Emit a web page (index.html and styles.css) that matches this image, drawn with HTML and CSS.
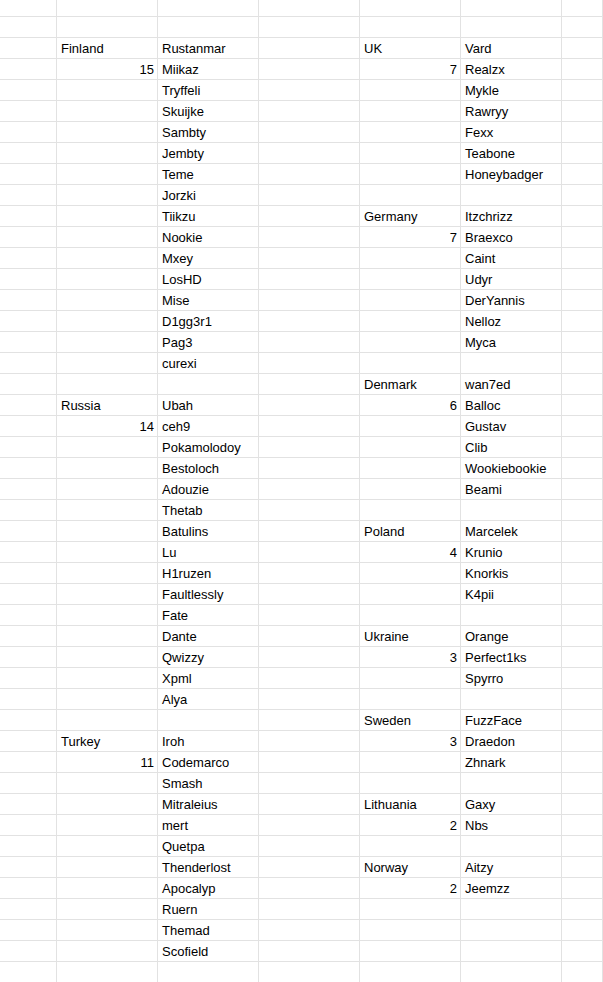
FILE: index.html
```html
<!DOCTYPE html>
<html>
<head>
<meta charset="utf-8">
<link rel="stylesheet" href="styles.css">
</head>
<body>
<div class="sheet">
<div class="row top"><span></span><span></span><span></span><span></span><span></span><span></span><span></span></div>
<div class="row"><span></span><span></span><span></span><span></span><span></span><span></span><span></span></div>
<div class="row"><span></span><span>Finland</span><span>Rustanmar</span><span></span><span>UK</span><span>Vard</span><span></span></div>
<div class="row"><span></span><span class="n">15</span><span>Miikaz</span><span></span><span class="n">7</span><span>Realzx</span><span></span></div>
<div class="row"><span></span><span></span><span>Tryffeli</span><span></span><span></span><span>Mykle</span><span></span></div>
<div class="row"><span></span><span></span><span>Skuijke</span><span></span><span></span><span>Rawryy</span><span></span></div>
<div class="row"><span></span><span></span><span>Sambty</span><span></span><span></span><span>Fexx</span><span></span></div>
<div class="row"><span></span><span></span><span>Jembty</span><span></span><span></span><span>Teabone</span><span></span></div>
<div class="row"><span></span><span></span><span>Teme</span><span></span><span></span><span>Honeybadger</span><span></span></div>
<div class="row"><span></span><span></span><span>Jorzki</span><span></span><span></span><span></span><span></span></div>
<div class="row"><span></span><span></span><span>Tiikzu</span><span></span><span>Germany</span><span>Itzchrizz</span><span></span></div>
<div class="row"><span></span><span></span><span>Nookie</span><span></span><span class="n">7</span><span>Braexco</span><span></span></div>
<div class="row"><span></span><span></span><span>Mxey</span><span></span><span></span><span>Caint</span><span></span></div>
<div class="row"><span></span><span></span><span>LosHD</span><span></span><span></span><span>Udyr</span><span></span></div>
<div class="row"><span></span><span></span><span>Mise</span><span></span><span></span><span>DerYannis</span><span></span></div>
<div class="row"><span></span><span></span><span>D1gg3r1</span><span></span><span></span><span>Nelloz</span><span></span></div>
<div class="row"><span></span><span></span><span>Pag3</span><span></span><span></span><span>Myca</span><span></span></div>
<div class="row"><span></span><span></span><span>curexi</span><span></span><span></span><span></span><span></span></div>
<div class="row"><span></span><span></span><span></span><span></span><span>Denmark</span><span>wan7ed</span><span></span></div>
<div class="row"><span></span><span>Russia</span><span>Ubah</span><span></span><span class="n">6</span><span>Balloc</span><span></span></div>
<div class="row"><span></span><span class="n">14</span><span>ceh9</span><span></span><span></span><span>Gustav</span><span></span></div>
<div class="row"><span></span><span></span><span>Pokamolodoy</span><span></span><span></span><span>Clib</span><span></span></div>
<div class="row"><span></span><span></span><span>Bestoloch</span><span></span><span></span><span>Wookiebookie</span><span></span></div>
<div class="row"><span></span><span></span><span>Adouzie</span><span></span><span></span><span>Beami</span><span></span></div>
<div class="row"><span></span><span></span><span>Thetab</span><span></span><span></span><span></span><span></span></div>
<div class="row"><span></span><span></span><span>Batulins</span><span></span><span>Poland</span><span>Marcelek</span><span></span></div>
<div class="row"><span></span><span></span><span>Lu</span><span></span><span class="n">4</span><span>Krunio</span><span></span></div>
<div class="row"><span></span><span></span><span>H1ruzen</span><span></span><span></span><span>Knorkis</span><span></span></div>
<div class="row"><span></span><span></span><span>Faultlessly</span><span></span><span></span><span>K4pii</span><span></span></div>
<div class="row"><span></span><span></span><span>Fate</span><span></span><span></span><span></span><span></span></div>
<div class="row"><span></span><span></span><span>Dante</span><span></span><span>Ukraine</span><span>Orange</span><span></span></div>
<div class="row"><span></span><span></span><span>Qwizzy</span><span></span><span class="n">3</span><span>Perfect1ks</span><span></span></div>
<div class="row"><span></span><span></span><span>Xpml</span><span></span><span></span><span>Spyrro</span><span></span></div>
<div class="row"><span></span><span></span><span>Alya</span><span></span><span></span><span></span><span></span></div>
<div class="row"><span></span><span></span><span></span><span></span><span>Sweden</span><span>FuzzFace</span><span></span></div>
<div class="row"><span></span><span>Turkey</span><span>Iroh</span><span></span><span class="n">3</span><span>Draedon</span><span></span></div>
<div class="row"><span></span><span class="n">11</span><span>Codemarco</span><span></span><span></span><span>Zhnark</span><span></span></div>
<div class="row"><span></span><span></span><span>Smash</span><span></span><span></span><span></span><span></span></div>
<div class="row"><span></span><span></span><span>Mitraleius</span><span></span><span>Lithuania</span><span>Gaxy</span><span></span></div>
<div class="row"><span></span><span></span><span>mert</span><span></span><span class="n">2</span><span>Nbs</span><span></span></div>
<div class="row"><span></span><span></span><span>Quetpa</span><span></span><span></span><span></span><span></span></div>
<div class="row"><span></span><span></span><span>Thenderlost</span><span></span><span>Norway</span><span>Aitzy</span><span></span></div>
<div class="row"><span></span><span></span><span>Apocalyp</span><span></span><span class="n">2</span><span>Jeemzz</span><span></span></div>
<div class="row"><span></span><span></span><span>Ruern</span><span></span><span></span><span></span><span></span></div>
<div class="row"><span></span><span></span><span>Themad</span><span></span><span></span><span></span><span></span></div>
<div class="row"><span></span><span></span><span>Scofield</span><span></span><span></span><span></span><span></span></div>
<div class="row"><span></span><span></span><span></span><span></span><span></span><span></span><span></span></div>
</div>
</body>
</html>
```
FILE: styles.css
```css
html, body {
  margin: 0;
  padding: 0;
  background: #fff;
  overflow: hidden;
}
.sheet {
  width: 603px;
  font-family: "Liberation Sans", Arial, sans-serif;
  font-size: 13px;
  color: #000;
}
.row {
  display: grid;
  grid-template-columns: 57px 101px 101px 101px 101px 101px 1fr;
  height: 21px;
}
.row.top {
  height: 17px;
}
.row span {
  box-sizing: border-box;
  border-right: 1px solid #e2e2e2;
  border-bottom: 1px solid #e2e2e2;
  padding: 0 3px 2px 4px;
  display: flex;
  align-items: flex-end;
  line-height: 15px;
  white-space: nowrap;
  overflow: hidden;
}
.row span.n {
  justify-content: flex-end;
}
```
